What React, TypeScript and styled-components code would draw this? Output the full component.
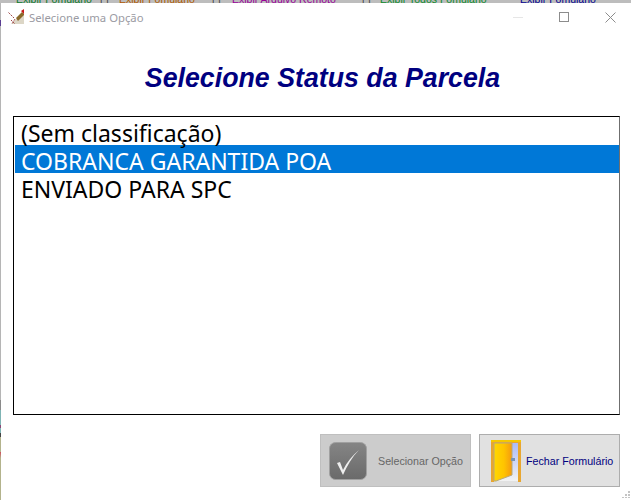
import styled, { createGlobalStyle } from "styled-components";

const GlobalStyle = createGlobalStyle`
  html, body {
    margin: 0;
    padding: 0;
    background: #ffffff;
  }
`;

const Desktop = styled.div`
  width: 631px;
  height: 500px;
  display: flex;
  flex-direction: column;
  overflow: hidden;
`;

const BehindStrip = styled.div`
  height: 3px;
  flex: none;
  display: flex;
  align-items: flex-end;
  overflow: hidden;
  background: #bdbdbd;
  font-family: "Liberation Sans", Arial, sans-serif;
  font-size: 10.5px;
  line-height: 8px;
  white-space: nowrap;
`;

const BehindLabel = styled.span<{ $color: string; $left: number; $width: number }>`
  color: ${({ $color }) => $color};
  margin-left: ${({ $left }) => $left}px;
  width: ${({ $width }) => $width}px;
  flex: none;
`;

const Body = styled.div`
  flex: 1;
  display: flex;
  min-height: 0;
`;

const LeftEdge = styled.div`
  width: 1px;
  flex: none;
  background: linear-gradient(
    to bottom,
    #b5b5b5 0,
    #b5b5b5 17px,
    #5a3d92 17px,
    #5a3d92 23px,
    #b5b5b5 23px,
    #b5b5b5 397px,
    #8a8a8a 397px,
    #8a8a8a 407px,
    #7fb4b4 407px,
    #7fb4b4 422px,
    #8a4a78 422px,
    #8a4a78 425px,
    #7fb4b4 425px,
    #7fb4b4 430px,
    #444444 430px,
    #444444 434px,
    #b3b38c 434px,
    #b3b38c 449px,
    #d04a5a 449px,
    #b3b38c 455px,
    #b3b38c 100%
  );
`;

const Window = styled.div`
  flex: 1;
  display: flex;
  flex-direction: column;
  background: #ffffff;
  padding-right: 11px;
`;

const TitleBar = styled.div`
  height: 28px;
  flex: none;
  display: flex;
  align-items: center;
  padding-left: 7px;
  margin-right: -11px;
`;

const AppIcon = styled.svg`
  width: 17px;
  height: 16px;
  flex: none;
`;

const TitleText = styled.span`
  margin-left: 4px;
  font-family: "Noto Sans", "Open Sans", sans-serif;
  font-size: 11.3px;
  color: #9b9ba3;
`;

const WindowControls = styled.div`
  margin-left: auto;
  margin-right: -2px;
  display: flex;
  align-items: center;
`;

const ControlButton = styled.div`
  width: 46px;
  height: 28px;
  display: flex;
  align-items: center;
  justify-content: center;
`;

const Heading = styled.h1`
  margin: 25px 0 0;
  padding-left: 24px;
  height: 60px;
  font-family: "Liberation Sans", Arial, sans-serif;
  font-size: 26.75px;
  font-weight: bold;
  font-style: italic;
  line-height: 44px;
  color: #000080;
  text-align: center;
`;

const ListBox = styled.div`
  margin-left: 12px;
  height: 299px;
  box-sizing: border-box;
  border: 1px solid #000000;
  border-right-color: #6f6f6f;
  padding-left: 1px;
`;

const ListItem = styled.div<{ $selected?: boolean }>`
  height: 28px;
  box-sizing: border-box;
  padding: 4px 0 0 6px;
  font-family: "Noto Sans", "Open Sans", sans-serif;
  font-size: 23px;
  line-height: 24px;
  white-space: nowrap;
  color: ${({ $selected }) => ($selected ? "#ffffff" : "#000000")};
  background: ${({ $selected }) => ($selected ? "#0078d7" : "transparent")};
`;

const ButtonRow = styled.div`
  margin-top: 19px;
  display: flex;
  justify-content: flex-end;
  gap: 8px;
`;

const ActionButton = styled.div<{ $width: number; $disabled?: boolean }>`
  width: ${({ $width }) => $width}px;
  height: 53px;
  box-sizing: border-box;
  display: flex;
  align-items: center;
  border: 1px solid ${({ $disabled }) => ($disabled ? "#bfbfbf" : "#adadad")};
  background: ${({ $disabled }) => ($disabled ? "#cccccc" : "#e1e1e1")};
  font-family: "Liberation Sans", Arial, sans-serif;
  font-size: 10.7px;
  color: ${({ $disabled }) => ($disabled ? "#666666" : "#000080")};
`;

const CheckIcon = styled.svg`
  width: 38px;
  height: 38px;
  margin-left: 8px;
  margin-right: 11px;
  flex: none;
`;

const DoorIcon = styled.svg`
  width: 32px;
  height: 44px;
  margin-left: 10px;
  margin-right: 4px;
  flex: none;
`;

const GripDots = styled.svg`
  position: absolute;
  right: 0;
  bottom: 2px;
  width: 9px;
  height: 7px;
`;

export default function App() {
  return (
    <Desktop>
      <GlobalStyle />
      <BehindStrip>
        <BehindLabel $color="#0a7a2a" $left={16} $width={71}>Exibir Fomulário</BehindLabel>
        <BehindLabel $color="#444444" $left={13} $width={10}>[ ]</BehindLabel>
        <BehindLabel $color="#b05a00" $left={9} $width={78}>Exibir Fomulário</BehindLabel>
        <BehindLabel $color="#444444" $left={15} $width={10}>[ ]</BehindLabel>
        <BehindLabel $color="#990099" $left={10} $width={115}>Exibir Arquivo Remoto</BehindLabel>
        <BehindLabel $color="#444444" $left={15} $width={10}>[ ]</BehindLabel>
        <BehindLabel $color="#0a8a2a" $left={8} $width={107}>Exibir Todos Fomulário</BehindLabel>
        <BehindLabel $color="#000090" $left={33} $width={75}>Exibir Fomulário</BehindLabel>
      </BehindStrip>
      <Body>
        <LeftEdge />
        <Window>
          <TitleBar>
            <AppIcon viewBox="0 0 17 16">
              <path d="M3 15 L16 3 L16 15 Z" fill="#dcd6c6" />
              <path d="M8 9 L14 3 L16 5 L16 6 L10 12 Z" fill="#8a6a2a" />
              <path d="M13 2 L16 0 L16 5 Z" fill="#c81818" />
              <path
                d="M0.5 3.5 L6 9 M3 11 L7 15 M7 10 L4 15"
                stroke="#a04a4a"
                strokeWidth="1"
                strokeDasharray="2 1"
                fill="none"
              />
            </AppIcon>
            <TitleText>Selecione uma Opção</TitleText>
            <WindowControls>
              <ControlButton>
                <svg width="11" height="11" viewBox="0 0 11 11">
                  <path d="M0 5.5 H10" stroke="#e6e6e6" strokeWidth="1" />
                </svg>
              </ControlButton>
              <ControlButton>
                <svg width="11" height="11" viewBox="0 0 11 11">
                  <rect x="0.5" y="0.5" width="9" height="9" fill="none" stroke="#8c8c8c" strokeWidth="1" />
                </svg>
              </ControlButton>
              <ControlButton>
                <svg width="11" height="11" viewBox="0 0 11 11">
                  <path d="M0.5 0.5 L10.5 10.5 M10.5 0.5 L0.5 10.5" stroke="#8c8c8c" strokeWidth="1" />
                </svg>
              </ControlButton>
            </WindowControls>
          </TitleBar>
          <Heading>Selecione Status da Parcela</Heading>
          <ListBox>
            <ListItem>(Sem classificação)</ListItem>
            <ListItem $selected>COBRANCA GARANTIDA POA</ListItem>
            <ListItem>ENVIADO PARA SPC</ListItem>
          </ListBox>
          <ButtonRow>
            <ActionButton $width={151} $disabled>
              <CheckIcon viewBox="0 0 38 38">
                <defs>
                  <linearGradient id="checkBg" x1="0" y1="0" x2="0" y2="1">
                    <stop offset="0" stopColor="#858585" />
                    <stop offset="1" stopColor="#6a6a6a" />
                  </linearGradient>
                </defs>
                <rect x="0.5" y="0.5" width="37" height="37" rx="6" fill="url(#checkBg)" stroke="#a0a0a0" />
                <path d="M8 21 L14 33 C18 24 23 15 30 8 C23 14 18 20 14 28 L11 20 Z" fill="#eeeeee" />
              </CheckIcon>
              Selecionar Opção
            </ActionButton>
            <ActionButton $width={141}>
              <DoorIcon viewBox="0 0 32 44">
                <defs>
                  <linearGradient id="doorSky" x1="0" y1="0" x2="0" y2="1">
                    <stop offset="0" stopColor="#a8b8f8" />
                    <stop offset="1" stopColor="#f2f2f2" />
                  </linearGradient>
                  <linearGradient id="doorLeaf" x1="0" y1="0" x2="1" y2="0">
                    <stop offset="0" stopColor="#ffd800" />
                    <stop offset="0.55" stopColor="#ffc400" />
                    <stop offset="1" stopColor="#f59a10" />
                  </linearGradient>
                </defs>
                <rect x="2" y="2" width="28" height="40" fill="url(#doorSky)" />
                <path d="M1 1 H31 V43 H28 V4 H4 V43 H1 Z" fill="#e8a630" />
                <path d="M1 1 H31 V3 H1 Z" fill="#f5c800" />
                <path d="M4 4 H22 V36 L6 42 H4 Z" fill="url(#doorLeaf)" stroke="#b8a878" strokeWidth="1" />
                <rect x="21" y="19" width="4" height="3" fill="#7a93b0" />
              </DoorIcon>
              Fechar Formulário
            </ActionButton>
          </ButtonRow>
        </Window>
      </Body>
      <GripDots viewBox="0 0 9 7">
        <path d="M6 0h2v2H6zM3 3h2v2H3zM6 3h2v2H6zM0 6h2v1H0zM3 6h2v1H3zM6 6h2v1H6z" fill="#c4c4c4" />
      </GripDots>
    </Desktop>
  );
}
